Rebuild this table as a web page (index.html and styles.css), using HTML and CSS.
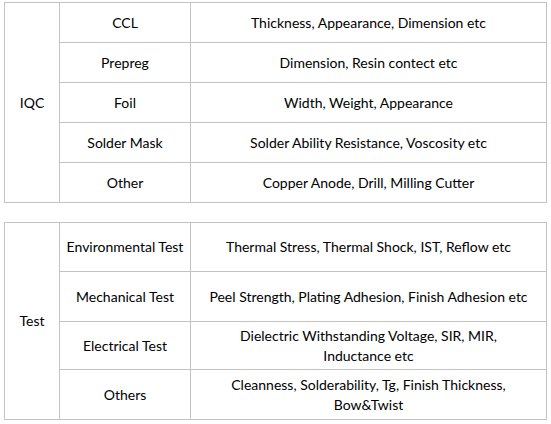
FILE: index.html
```html
<!DOCTYPE html>
<html>
<head>
<meta charset="utf-8">
<link rel="stylesheet" href="styles.css">
</head>
<body>
<div class="page">
  <table class="grid grid-iqc">
    <colgroup><col class="c1"><col class="c2"><col class="c3"></colgroup>
    <tr><td rowspan="5">IQC</td><td>CCL</td><td>Thickness, Appearance, Dimension etc</td></tr>
    <tr><td>Prepreg</td><td>Dimension, Resin contect etc</td></tr>
    <tr><td>Foil</td><td>Width, Weight, Appearance</td></tr>
    <tr><td>Solder Mask</td><td>Solder Ability Resistance, Voscosity etc</td></tr>
    <tr><td>Other</td><td>Copper Anode, Drill, Milling Cutter</td></tr>
  </table>
  <table class="grid grid-test">
    <colgroup><col class="c1"><col class="c2"><col class="c3"></colgroup>
    <tr class="r1"><td rowspan="4">Test</td><td>Environmental Test</td><td>Thermal Stress, Thermal Shock, IST, Reflow etc</td></tr>
    <tr class="r2"><td>Mechanical Test</td><td>Peel Strength, Plating Adhesion, Finish Adhesion etc</td></tr>
    <tr class="r3"><td>Electrical Test</td><td>Dielectric Withstanding Voltage, SIR, MIR,<br>Inductance etc</td></tr>
    <tr class="r4"><td>Others</td><td>Cleanness, Solderability, Tg, Finish Thickness,<br>Bow&amp;Twist</td></tr>
  </table>
</div>
</body>
</html>
```
FILE: styles.css
```css
html, body {
  margin: 0;
  padding: 0;
  background: #ffffff;
}
.page {
  padding: 2px 6px 0 4px;
  display: flex;
  flex-direction: column;
  gap: 19px;
  font-family: Lato, "Open Sans", sans-serif;
  font-size: 14px;
  line-height: 20px;
  color: #000000;
}
.grid {
  border-collapse: collapse;
  width: 542px;
  table-layout: fixed;
}
.grid td {
  border: 1px solid #c3c3c3;
  text-align: center;
  vertical-align: middle;
  padding: 0;
}
.c1 { width: 55px; }
.c2 { width: 131px; }
.c3 { width: 356px; }
.grid-iqc tr { height: 40px; }
.grid-test .r1 { height: 49px; }
.grid-test .r2 { height: 50px; }
.grid-test .r3 { height: 48px; }
.grid-test .r4 { height: 50px; }
```
